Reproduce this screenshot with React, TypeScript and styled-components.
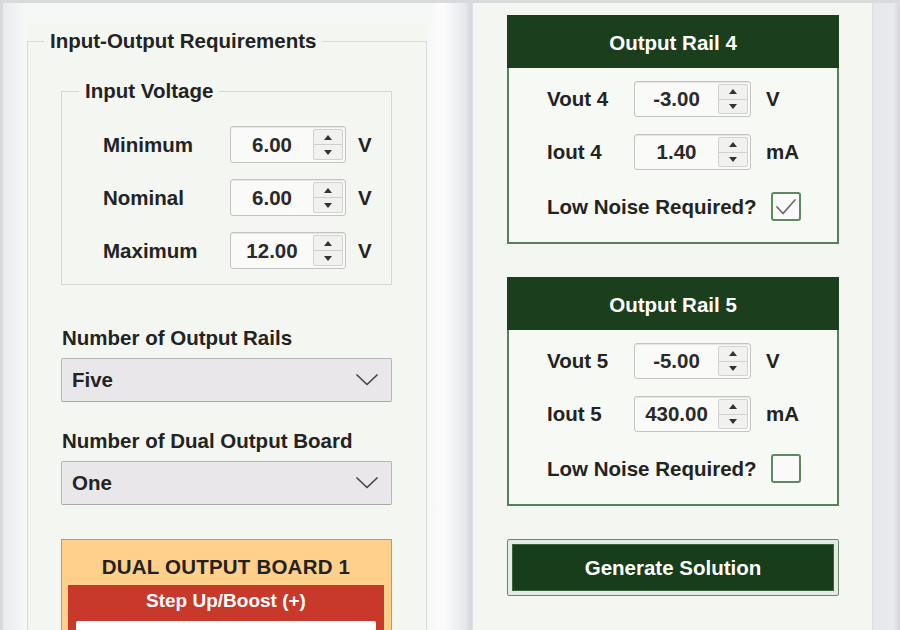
import styled, { createGlobalStyle } from "styled-components";

const GlobalStyle = createGlobalStyle`
  html, body {
    margin: 0;
    padding: 0;
    background: #ffffff;
  }
  * {
    box-sizing: border-box;
  }
  body {
    font-family: "Liberation Sans", Arial, Helvetica, sans-serif;
    color: #232323;
  }
`;

const Frame = styled.div`
  width: 900px;
  height: 630px;
  overflow: hidden;
  display: flex;
  border-top: 3px solid #d9dadc;
  border-left: 3px solid #d9dadc;
  background: #e8eaed;
`;

const LeftArea = styled.div`
  width: 470px;
  flex-shrink: 0;
  display: flex;
  flex-direction: column;
  padding: 22px 0 0 24px;
  background: linear-gradient(
    90deg,
    #e9ebed 0px,
    #f6f7f7 22px,
    #f6f7f7 426px,
    #fcfcfc 440px,
    #e7e9ec 462px,
    #d4d7db 468px,
    #e2e5e8 470px
  );
`;

const LeftPanel = styled.div`
  width: 400px;
  flex: 1;
  padding-top: 4px;
  background: #f4f7f1;
`;

const OuterFieldset = styled.fieldset`
  margin: 0;
  padding: 0 34px 60px 33px;
  min-width: 0;
  border: 1px solid #d8dcd4;
`;

const Legend = styled.legend<{ $indent: number }>`
  margin-left: ${(p) => p.$indent}px;
  padding: 0 6px;
  font-size: 20.5px;
  font-weight: 700;
  line-height: 24px;
`;

const InnerFieldset = styled.fieldset`
  margin: 26px 0 0;
  padding: 23px 0 15px 41px;
  min-width: 0;
  border: 1px solid #d6d9d2;
`;

const Rows = styled.div<{ $gap: number }>`
  display: flex;
  flex-direction: column;
  gap: ${(p) => p.$gap}px;
`;

const Row = styled.div<{ $height: number }>`
  display: flex;
  align-items: center;
  height: ${(p) => p.$height}px;
`;

const Label = styled.span<{ $width?: number }>`
  width: ${(p) => (p.$width ? `${p.$width}px` : "auto")};
  flex-shrink: 0;
  font-size: 20.5px;
  font-weight: 700;
  line-height: 24px;
  white-space: nowrap;
`;

const Unit = styled.span<{ $gap: number }>`
  margin-left: ${(p) => p.$gap}px;
  font-size: 20.5px;
  font-weight: 700;
  line-height: 24px;
`;

const SpinBox = styled.div<{ $width: number }>`
  width: ${(p) => p.$width}px;
  height: 100%;
  display: flex;
  border: 1px solid #c3c4c1;
  border-radius: 3px;
  background: #fafaf8;
  box-shadow: inset 0 1px 0 #e6e6e4;
`;

const SpinValue = styled.div`
  flex: 1;
  display: flex;
  align-items: center;
  justify-content: center;
  font-size: 20.5px;
  font-weight: 700;
  color: #2a2a2a;
`;

const SpinButtons = styled.div`
  width: 30px;
  margin: 2px 2px 2px 0;
  display: flex;
  flex-direction: column;
  border: 1px solid #d2d2d0;
  border-radius: 2px;
  background: #f1f1ef;
`;

const SpinHalf = styled.div<{ $down?: boolean }>`
  flex: 1;
  display: flex;
  align-items: center;
  justify-content: center;
  border-top: ${(p) => (p.$down ? "1px solid #d0d0ce" : "none")};

  &::after {
    content: "";
    width: 0;
    height: 0;
    border-left: 4px solid transparent;
    border-right: 4px solid transparent;
    border-${(p) => (p.$down ? "top" : "bottom")}: 5px solid #333;
  }
`;

const FieldGroup = styled.div<{ $top: number }>`
  margin-top: ${(p) => p.$top}px;
`;

const GroupLabel = styled.div`
  font-size: 20.5px;
  font-weight: 700;
  line-height: 24px;
  padding-left: 1px;
  margin-bottom: 8px;
`;

const Select = styled.div`
  height: 44px;
  display: flex;
  align-items: center;
  justify-content: space-between;
  padding: 0 13px 0 10px;
  border: 1px solid #b4b4b4;
  border-bottom-color: #a8a8a8;
  border-radius: 2px;
  background: #e9e7e9;
  font-size: 20.5px;
  font-weight: 700;
`;

const BoardBox = styled.div`
  margin-top: 34px;
  padding: 15px 7px 0 6px;
  border: 1px solid #a39f94;
  background: #ffd08c;
`;

const BoardTitle = styled.div`
  text-align: center;
  font-size: 20.5px;
  font-weight: 700;
  line-height: 24px;
  letter-spacing: 0.2px;
  color: #222;
`;

const BoostBar = styled.div`
  margin-top: 6px;
  padding: 4px 8px 12px;
  background: #c8382b;
  color: #fff;
`;

const BoostTitle = styled.div`
  text-align: center;
  font-size: 19px;
  font-weight: 700;
  line-height: 24px;
`;

const WhiteField = styled.div`
  margin-top: 8px;
  height: 60px;
  background: #ffffff;
  border-radius: 2px;
`;

const RightPanel = styled.div`
  width: 399px;
  flex-shrink: 0;
  padding: 12px 33px 0 34px;
  background: #f4f7f1;
`;

const RightGutter = styled.div`
  flex: 1;
  background: linear-gradient(
    90deg,
    #d9dbda 0px,
    #e6e8ec 2px,
    #e8eaee 22px,
    #dcdee2 25px,
    #d2d4d8 28px
  );
`;

const Card = styled.div`
  width: 332px;
  margin-bottom: 33px;
  border: 2px solid #55805a;
  background: #f7f9f4;
`;

const CardHeader = styled.div`
  height: 53px;
  margin: -2px -2px 0;
  display: flex;
  align-items: center;
  justify-content: center;
  padding-top: 2px;
  background: #1b3e1d;
  color: #ffffff;
  font-size: 20.5px;
  font-weight: 700;
`;

const CardBody = styled.div`
  padding: 13px 0 21px 38px;
`;

const CheckRow = styled.div`
  margin-top: 22px;
  height: 29px;
  display: flex;
  align-items: center;
`;

const CheckBox = styled.div`
  width: 30px;
  height: 29px;
  margin-left: 14px;
  display: flex;
  align-items: center;
  justify-content: center;
  border: 2px solid #5d8a60;
  border-radius: 3px;
  background: #fafbf8;
`;

const ButtonFrame = styled.div`
  width: 332px;
  margin-top: 4px;
  padding: 4px;
  border: 1px solid #6a866b;
  border-radius: 2px;
  background: #e4ebe3;
`;

const GenerateButton = styled.button`
  width: 100%;
  height: 47px;
  display: flex;
  align-items: center;
  justify-content: center;
  border: 1px solid #3f5f41;
  background: #173d1a;
  color: #ffffff;
  font-family: inherit;
  font-size: 20.5px;
  font-weight: 700;
  cursor: pointer;
`;

function Spinner({ value, width }: { value: string; width: number }) {
  return (
    <SpinBox $width={width}>
      <SpinValue>{value}</SpinValue>
      <SpinButtons>
        <SpinHalf />
        <SpinHalf $down />
      </SpinButtons>
    </SpinBox>
  );
}

function Chevron() {
  return (
    <svg width="22" height="12" viewBox="0 0 22 12" fill="none">
      <polyline
        points="1,1 11,10.5 21,1"
        stroke="#474747"
        strokeWidth="1.7"
        strokeLinejoin="round"
        strokeLinecap="round"
      />
    </svg>
  );
}

function Check() {
  return (
    <svg width="24" height="22" viewBox="0 0 24 22" fill="none">
      <polyline
        points="3,11 9,17.5 21,4"
        stroke="#6e6e6e"
        strokeWidth="1.8"
        strokeLinejoin="round"
        strokeLinecap="round"
      />
    </svg>
  );
}

const inputRows = [
  { label: "Minimum", value: "6.00" },
  { label: "Nominal", value: "6.00" },
  { label: "Maximum", value: "12.00" },
];

const rails = [
  { n: 4, vout: "-3.00", iout: "1.40", lowNoise: true },
  { n: 5, vout: "-5.00", iout: "430.00", lowNoise: false },
];

export default function App() {
  return (
    <>
      <GlobalStyle />
      <Frame>
        <LeftArea>
          <LeftPanel>
            <OuterFieldset>
              <Legend $indent={-17}>Input-Output Requirements</Legend>
              <InnerFieldset>
                <Legend $indent={-24}>Input Voltage</Legend>
                <Rows $gap={16}>
                  {inputRows.map((r) => (
                    <Row key={r.label} $height={37}>
                      <Label $width={127}>{r.label}</Label>
                      <Spinner value={r.value} width={116} />
                      <Unit $gap={12}>V</Unit>
                    </Row>
                  ))}
                </Rows>
              </InnerFieldset>

              <FieldGroup $top={41}>
                <GroupLabel>Number of Output Rails</GroupLabel>
                <Select>
                  <span>Five</span>
                  <Chevron />
                </Select>
              </FieldGroup>

              <FieldGroup $top={27}>
                <GroupLabel>Number of Dual Output Board</GroupLabel>
                <Select>
                  <span>One</span>
                  <Chevron />
                </Select>
              </FieldGroup>

              <BoardBox>
                <BoardTitle>DUAL OUTPUT BOARD 1</BoardTitle>
                <BoostBar>
                  <BoostTitle>Step Up/Boost (+)</BoostTitle>
                  <WhiteField />
                </BoostBar>
              </BoardBox>
            </OuterFieldset>
          </LeftPanel>
        </LeftArea>

        <RightPanel>
          {rails.map((rail) => (
            <Card key={rail.n}>
              <CardHeader>Output Rail {rail.n}</CardHeader>
              <CardBody>
                <Rows $gap={17}>
                  <Row $height={36}>
                    <Label $width={87}>Vout {rail.n}</Label>
                    <Spinner value={rail.vout} width={117} />
                    <Unit $gap={15}>V</Unit>
                  </Row>
                  <Row $height={36}>
                    <Label $width={87}>Iout {rail.n}</Label>
                    <Spinner value={rail.iout} width={117} />
                    <Unit $gap={15}>mA</Unit>
                  </Row>
                </Rows>
                <CheckRow>
                  <Label>Low Noise Required?</Label>
                  <CheckBox>{rail.lowNoise && <Check />}</CheckBox>
                </CheckRow>
              </CardBody>
            </Card>
          ))}
          <ButtonFrame>
            <GenerateButton>Generate Solution</GenerateButton>
          </ButtonFrame>
        </RightPanel>
        <RightGutter />
      </Frame>
    </>
  );
}
